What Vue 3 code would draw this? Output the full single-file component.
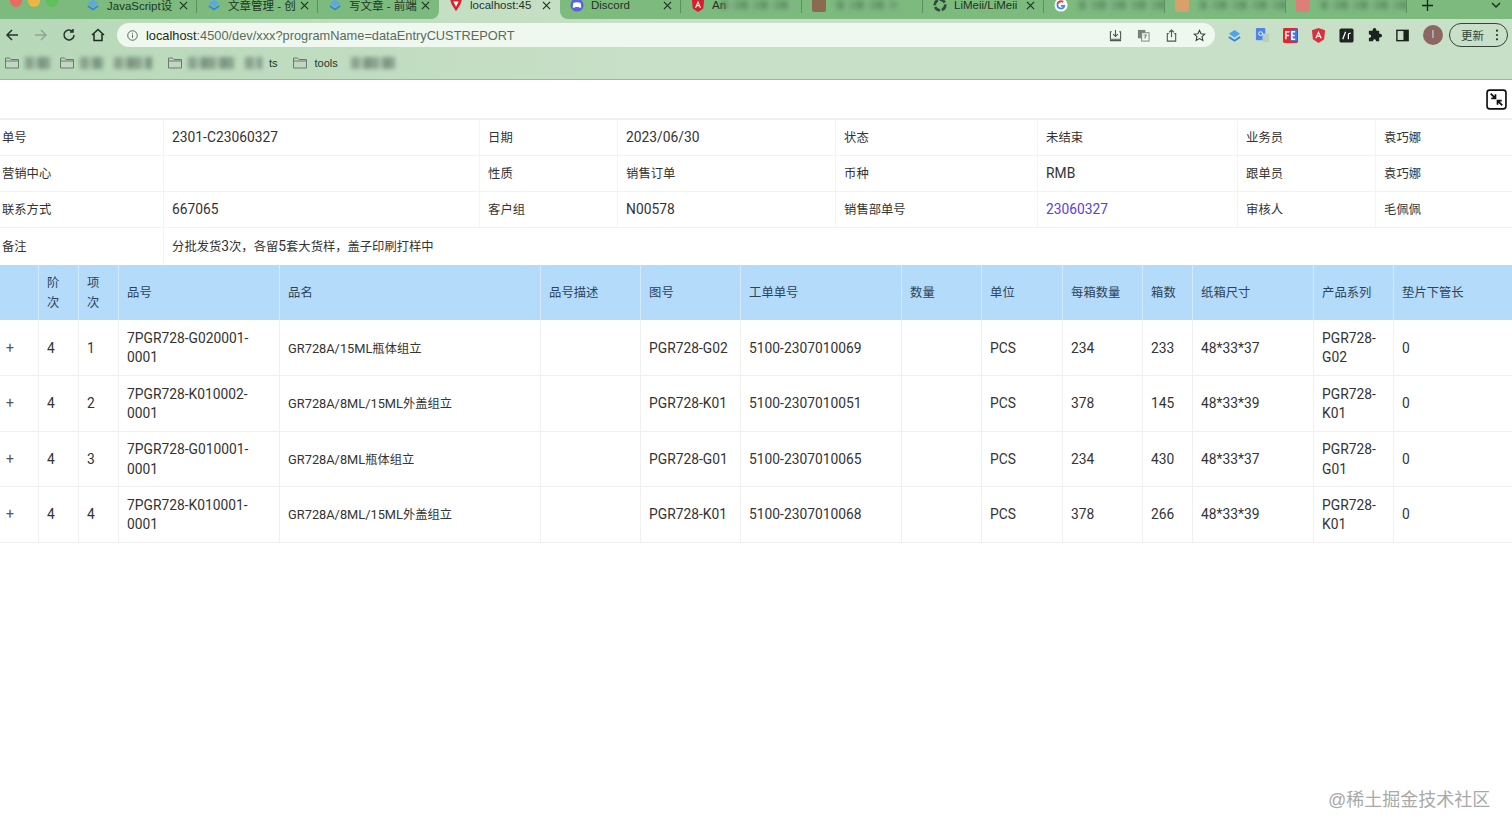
<script setup>
import { h } from 'vue'

// Latin and CJK runs have different optical sizes in the reference, so each run gets its own span.
const Txt = (props) => {
  const text = String(props.t)
  const mixed = /[\u2E80-\uFFEF]/.test(text)
  return (text.match(/[\u2E80-\uFFEF]+|[^\u2E80-\uFFEF]+/g) || []).map((run) => {
    if (/[\u2E80-\uFFEF]/.test(run)) return h('span', { class: 'cjk' }, run)
    return h('span', { class: mixed && /[A-Z]/.test(run) ? 'lat mix' : 'lat' }, run)
  })
}
Txt.props = ['t']

const tabs = [
  { title: 'JavaScript设', icon: 'layer', close: true },
  { title: '文章管理 - 创', icon: 'layer', close: true },
  { title: '写文章 - 前端', icon: 'layer', close: true, beforeActive: true },
  { title: 'localhost:45', icon: 'vite', close: true, active: true },
  { title: 'Discord', icon: 'discord', close: true, afterActive: true },
  { title: 'An', icon: 'angular', blur: 72 },
  { title: '', icon: 'photo', blur: 60 },
  { title: 'LiMeii/LiMeii', icon: 'github', close: true },
  { title: '', icon: 'google', blur: 88 },
  { title: '', icon: 'orange', blur: 90 },
  { title: '', icon: 'pink', blur: 90 }
]

const bookmarks = [
  { folder: true, blur: 25, gap: 10 },
  { folder: true, blur: 23, gap: 11 },
  { blur: 38, gap: 16 },
  { folder: true, blur: 46, gap: 11 },
  { blur: 17, text: 'ts', gap: 15 },
  { folder: true, text: 'tools', gap: 13 },
  { blur: 44, gap: 0 }
]

const info = [
  ['单号', '2301-C23060327', '日期', '2023/06/30', '状态', '未结束', '业务员', '袁巧娜'],
  ['营销中心', '', '性质', '销售订单', '币种', 'RMB', '跟单员', '袁巧娜'],
  ['联系方式', '667065', '客户组', 'N00578', '销售部单号', '23060327', '审核人', '毛佩佩']
]
const infoCols = [163, 316, 138, 218, 202, 200, 138, 137]
const cols = [38, 40, 40, 161, 261, 100, 100, 161, 80, 81, 80, 50, 121, 80, 119]
const heads = ['', '阶次', '项次', '品号', '品名', '品号描述', '图号', '工单单号', '数量', '单位', '每箱数量', '箱数', '纸箱尺寸', '产品系列', '垫片下管长']
const rows = [
  ['4', '1', '7PGR728-G020001-0001', 'GR728A/15ML瓶体组立', '', 'PGR728-G02', '5100-2307010069', '', 'PCS', '234', '233', '48*33*37', 'PGR728-G02', '0'],
  ['4', '2', '7PGR728-K010002-0001', 'GR728A/8ML/15ML外盖组立', '', 'PGR728-K01', '5100-2307010051', '', 'PCS', '378', '145', '48*33*39', 'PGR728-K01', '0'],
  ['4', '3', '7PGR728-G010001-0001', 'GR728A/8ML瓶体组立', '', 'PGR728-G01', '5100-2307010065', '', 'PCS', '234', '430', '48*33*37', 'PGR728-G01', '0'],
  ['4', '4', '7PGR728-K010001-0001', 'GR728A/8ML/15ML外盖组立', '', 'PGR728-K01', '5100-2307010068', '', 'PCS', '378', '266', '48*33*39', 'PGR728-K01', '0']
]
</script>

<template>
  <div class="page">
    <header class="chrome">
      <div class="tabstrip">
        <div class="lights"><i class="red"></i><i class="yellow"></i><i class="green"></i></div>
        <div v-for="(t, i) in tabs" :key="i" class="tab" :class="{ active: t.active, after: t.afterActive, before: t.beforeActive }">
          <svg v-if="t.icon === 'layer'" class="fav" viewBox="0 0 16 16"><path d="M8 2l6 4-6 4-6-4z" fill="#5aa7ea"/><path d="M2 9l6 4 6-4" fill="none" stroke="#2f86dd" stroke-width="2"/></svg>
          <svg v-else-if="t.icon === 'vite'" class="fav" viewBox="0 0 16 16"><path d="M1 1h14l-2 6-5 8-5-8z" fill="#d8232f"/><path d="M5 4h6l-3 6z" fill="#fff"/></svg>
          <svg v-else-if="t.icon === 'discord'" class="fav" viewBox="0 0 16 16"><circle cx="8" cy="8" r="7.5" fill="#5865d8"/><path d="M4 5.500c2.500-1 5.500-1 8 0l1 5-2 1-1-1.200H6l-1 1.200-2-1z" fill="#fff"/></svg>
          <svg v-else-if="t.icon === 'angular'" class="fav" viewBox="0 0 16 16"><path d="M8 0l7 2.500-1 9.500-6 4-6-4-1-9.500z" fill="#d3202c"/><path d="M8 3L4.500 11H6l.6-1.700h2.800L10 11h1.500zM7.200 8L8 6l.8 2z" fill="#fff"/></svg>
          <svg v-else-if="t.icon === 'github'" class="fav" viewBox="0 0 16 16"><circle cx="8" cy="8" r="6" fill="none" stroke="#33493a" stroke-width="3" stroke-dasharray="7 2"/></svg>
          <svg v-else-if="t.icon === 'google'" class="fav" viewBox="0 0 16 16"><circle cx="8" cy="8" r="7.500" fill="#fff"/><path d="M8 4a4 4 0 1 0 3.800 5H8" fill="none" stroke="#4285f4" stroke-width="2"/><path d="M4.500 6a4 4 0 0 1 6-1.500" fill="none" stroke="#e94235" stroke-width="2"/></svg>
          <span v-else class="fav patch" :class="t.icon"></span>
          <span v-if="t.title" class="tab-title">{{ t.title }}</span>
          <span v-if="t.blur" class="smear" :style="{ width: t.blur + 'px' }"></span>
          <svg v-if="t.close" class="tab-x" viewBox="0 0 10 10"><path d="M1 1l8 8M9 1l-8 8" stroke="#1f3324" stroke-width="1.300"/></svg>
        </div>
        <div class="strip-end">
          <svg class="newtab" viewBox="0 0 12 12"><path d="M6 0v12M0 6h12" stroke="#17251a" stroke-width="1.400"/></svg>
          <svg class="chev" viewBox="0 0 10 6"><path d="M1 1l4 4 4-4" fill="none" stroke="#17251a" stroke-width="1.300"/></svg>
        </div>
      </div>

      <div class="toolbar">
        <svg class="nav" viewBox="0 0 14 14"><path d="M13 7H2M7 2L2 7l5 5" fill="none" stroke="#26352a" stroke-width="1.500"/></svg>
        <svg class="nav forward" viewBox="0 0 14 14"><path d="M1 7h11M7 2l5 5-5 5" fill="none" stroke="#8ea794" stroke-width="1.500"/></svg>
        <svg class="nav" viewBox="0 0 14 14"><path d="M12 7a5 5 0 1 1-1.500-3.600M11 1v3H8" fill="none" stroke="#26352a" stroke-width="1.500"/></svg>
        <svg class="nav" viewBox="0 0 14 14"><path d="M1 7l6-5.500L13 7M3 6v6.500h8V6" fill="none" stroke="#1e2a21" stroke-width="1.500"/></svg>
        <div class="omnibox">
          <svg class="info" viewBox="0 0 12 12"><circle cx="6" cy="6" r="5.200" fill="none" stroke="#4a5a4e"/><path d="M6 5v3.500M6 3v1" stroke="#4a5a4e"/></svg>
          <span class="url"><b>localhost</b>:4500/dev/xxx?programName=dataEntryCUSTREPORT</span>
          <div class="omni-actions">
            <svg viewBox="0 0 14 14"><path d="M3 3H1.500v8h11V3H11M7 1v7M4.500 5.500L7 8l2.500-2.500M1 12.500h12" fill="none" stroke="#4c5a50" stroke-width="1.200"/></svg>
            <svg viewBox="0 0 14 14"><rect x="1" y="1" width="8" height="9" fill="#75827a"/><rect x="5" y="4" width="8" height="9" fill="#eef8ee" stroke="#75827a"/><path d="M7 6.500h4M9 6v4M7.500 10l3-3" stroke="#75827a" fill="none" stroke-width=".8"/></svg>
            <svg viewBox="0 0 14 14"><path d="M4 5H2.500v8h9V5H10M7 9V1M4.500 3.500L7 1l2.500 2.500" fill="none" stroke="#4c5a50" stroke-width="1.200"/></svg>
            <svg viewBox="0 0 14 14"><path d="M7 1.500l1.700 3.700 4 .4-3 2.700.9 4L7 10.300 3.400 12.300l.9-4-3-2.700 4-.4z" fill="none" stroke="#364238" stroke-width="1.200"/></svg>
          </div>
        </div>
        <div class="exts">
          <svg viewBox="0 0 16 16"><path d="M8 2l6 4-6 4-6-4z" fill="#4fa3ee"/><path d="M2 9.500l6 4 6-4" fill="none" stroke="#2f86dd" stroke-width="2"/></svg>
          <svg viewBox="0 0 16 16"><rect x="1" y="0" width="10" height="13" rx="1" fill="#4d86e8"/><rect x="8" y="6" width="7" height="9" fill="#b9cfc2"/><circle cx="6" cy="6" r="2" fill="none" stroke="#fff"/></svg>
          <svg viewBox="0 0 16 16"><rect width="16" height="16" rx="1.500" fill="#e3262b"/><rect x="8" y="2" width="7" height="12" fill="#3f78df"/><path d="M3 12V4h4M3 8h3.500M13 4H9.500v8H13M9.500 8H12.500" fill="none" stroke="#fff" stroke-width="1.600"/></svg>
          <svg viewBox="0 0 16 16"><path d="M8 0l7 2.500-1 9.500-6 4-6-4-1-9.500z" fill="#dc2f3c"/><path d="M8 3L4.500 11H6l.6-1.700h2.800L10 11h1.500zM7.200 8L8 6l.8 2z" fill="#fff"/></svg>
          <svg viewBox="0 0 16 16"><rect width="15" height="15" x=".5" y=".5" rx="2" fill="#1e2422"/><path d="M4 12L7 4M10 12V7c0-1.200 1-1.500 2.500-1.500" fill="none" stroke="#fff" stroke-width="1.300"/></svg>
          <svg viewBox="0 0 16 16"><path d="M6 2a2 2 0 0 1 4 0v1h3v3h1a2 2 0 0 1 0 4h-1v4H9.500v-1a1.600 1.600 0 0 0-3 0v1H2v-3.500h1a1.800 1.800 0 0 0 0-3.500H2V3h4z" fill="#1a231d"/></svg>
          <svg viewBox="0 0 16 16"><rect x="2" y="2.500" width="12" height="11" fill="none" stroke="#1a231d" stroke-width="1.500"/><rect x="9" y="2.500" width="5" height="11" fill="#1a231d"/></svg>
          <span class="avatar">I</span>
        </div>
        <div class="update">
          <span>更新</span>
          <svg viewBox="0 0 4 14"><circle cx="2" cy="2" r="1.300"/><circle cx="2" cy="7" r="1.300"/><circle cx="2" cy="12" r="1.300"/></svg>
        </div>
      </div>

      <div class="bookmarks">
        <div v-for="(b, i) in bookmarks" :key="i" class="bm" :style="{ marginRight: b.gap + 'px' }">
          <svg v-if="b.folder" class="folder" viewBox="0 0 14 12"><path d="M.5 11V1h4l1.500 1.500h7.500V11z" fill="#c3d6c3" stroke="#6a7a6d"/><path d="M.5 4h13" stroke="#6a7a6d"/></svg>
          <span v-if="b.blur" class="smear dark" :style="{ width: b.blur + 'px' }"></span>
          <span v-if="b.text" class="bm-text" :class="{ spaced: b.blur }">{{ b.text }}</span>
        </div>
      </div>
    </header>

    <main class="content">
      <div class="actionbar">
        <button class="exit" aria-label="退出全屏">
          <svg viewBox="0 0 20 20"><rect x="1" y="1" width="18" height="18" rx="2.500" fill="#fff" stroke="#111" stroke-width="1.600"/><path d="M4.500 4.500L9 9M9 5v4H5M15.500 15.500L11 11M15 11h-4v4" fill="none" stroke="#111" stroke-width="1.700"/></svg>
        </button>
      </div>

      <table class="info-table">
        <colgroup><col v-for="(w, i) in infoCols" :key="i" :style="{ width: w + 'px' }" /></colgroup>
        <tbody>
          <tr v-for="(r, i) in info" :key="i">
            <td v-for="(c, j) in r" :key="j" :class="{ link: c === '23060327' }"><Txt :t="c" /></td>
          </tr>
          <tr class="last">
            <td><Txt t="备注" /></td>
            <td colspan="7"><Txt t="分批发货3次，各留5套大货样，盖子印刷打样中" /></td>
          </tr>
        </tbody>
      </table>

      <table class="data-table">
        <colgroup><col v-for="(w, i) in cols" :key="i" :style="{ width: w + 'px' }" /></colgroup>
        <thead>
          <tr><th v-for="(h2, i) in heads" :key="i"><Txt :t="h2" /></th></tr>
        </thead>
        <tbody>
          <tr v-for="(r, i) in rows" :key="i">
            <td class="expand">+</td>
            <td v-for="(c, j) in r" :key="j"><Txt :t="c" /></td>
          </tr>
        </tbody>
      </table>
    </main>

    <div class="watermark">@稀土掘金技术社区</div>
  </div>
</template>

<style>
.cjk { font-family: "Noto Sans CJK SC", sans-serif; font-size: 12.300px; }
.lat { font-family: Roboto, "Liberation Sans", sans-serif; font-size: 13.800px; }
.lat.mix { font-size: 12.800px; }
</style>

<style scoped>
.page {
  position: relative;
  width: 1512px;
  height: 834px;
  overflow: hidden;
  background: #fff;
  font-family: "Liberation Sans", "Noto Sans CJK SC", sans-serif;
  font-size: 13px;
  color: #333;
}

/* browser chrome */
.chrome { height: 80px; background: linear-gradient(90deg, #b7d9b8, #c8e0c8 45%); border-bottom: 1px solid #9fb3a2; box-sizing: border-box; }
.tabstrip { display: flex; align-items: flex-end; height: 19px; overflow: hidden; }
.lights { flex: none; display: flex; align-items: flex-start; align-self: flex-start; gap: 6px; width: 76px; height: 24px; padding-left: 10px; box-sizing: border-box; margin-top: -5px; background: #7cba7e; }
.lights i { width: 12px; height: 12px; border-radius: 50%; }
.red { background: #ea6b62; }
.yellow { background: #edb544; }
.green { background: #5dc25a; }
.tab { display: flex; align-items: center; flex: none; box-sizing: border-box; width: 121px; height: 28px; padding: 0 9px 0 10px; position: relative; color: #1f3324; font-size: 11.500px; background: #7cba7e; }
.tab::after { content: ""; position: absolute; right: 0; top: 0; bottom: 6px; width: 1px; background: #5d8f60; }
.tab.active { background: #c4dfc4; }
.tab.active::after, .tab.before::after { display: none; }
.tab.before { border-bottom-right-radius: 8px; }
.tab.after { border-bottom-left-radius: 8px; }
.fav { flex: none; width: 14px; height: 14px; margin-right: 7px; }
.patch { border-radius: 2px; }
.photo { background: #8a6a50; }
.orange { background: #d9a06c; }
.pink { background: #dd7f78; }
.tab-title { flex: 1; min-width: 0; white-space: nowrap; }
.tab-x { flex: none; width: 9px; height: 9px; margin-left: 3px; }
.smear { display: inline-block; flex: none; height: 8px; background: repeating-linear-gradient(90deg, #55805d 0 7px, #8fb596 7px 12px, #6a9672 12px 20px); opacity: .7; filter: blur(2.500px); }
.smear.dark { background: repeating-linear-gradient(90deg, #73897a 0 8px, #a0b5a5 8px 13px, #5f7766 13px 19px); height: 12px; filter: blur(2px); }
.tab .smear { margin-left: 4px; max-width: 88px; }
.strip-end { flex: 1; height: 28px; position: relative; background: #7cba7e; }
.newtab { position: absolute; left: 15px; top: 9px; width: 11px; height: 11px; }
.chev { position: absolute; left: 84px; top: 11px; width: 10px; height: 6px; }

.toolbar { display: flex; align-items: flex-start; height: 29px; padding: 4px 4px 0 5px; box-sizing: border-box; }
.nav { flex: none; width: 14px; height: 14px; margin: 5px 14.500px 0 0; }
.omnibox { display: flex; align-items: center; flex: none; width: 1098px; height: 24px; margin-left: -2px; padding: 0 9px 0 10px; box-sizing: border-box; background: #eef8ee; border-radius: 12px; }
.info { width: 11px; height: 11px; margin-right: 8px; flex: none; }
.url { flex: 1; color: #5b6a5f; font-size: 12.800px; white-space: nowrap; }
.url b { font-weight: 400; color: #1f2a22; }
.omni-actions { display: flex; gap: 15px; }
.omni-actions svg { width: 13px; height: 13px; }
.exts { display: flex; align-items: center; gap: 13px; height: 24px; margin-left: 12px; flex: none; }
.exts svg { width: 15px; height: 15px; flex: none; }
.avatar { width: 20px; height: 20px; border-radius: 50%; background: #8c6660; color: #e8d8d5; font-size: 10px; line-height: 20px; text-align: center; }
.update { display: flex; align-items: center; justify-content: space-between; flex: none; box-sizing: border-box; width: 59px; height: 24px; margin-left: 6px; padding: 0 8px 0 11px; border: 1px solid #33443a; border-radius: 12px; font-size: 11.500px; color: #33443a; }
.update svg { width: 4px; height: 12px; fill: #26352a; }

.bookmarks { display: flex; align-items: center; height: 30px; padding-left: 5px; box-sizing: border-box; }
.bm { display: flex; align-items: center; flex: none; }
.folder { flex: none; width: 14px; height: 12px; margin-right: 6px; }
.bm-text { font-size: 11px; color: #26352a; margin-left: 2px; }
.bm-text.spaced { margin-left: 7px; }

/* page body */
.actionbar { display: flex; justify-content: flex-end; align-items: center; height: 38px; padding-right: 5px; box-sizing: border-box; }
.exit { display: block; width: 21px; height: 21px; padding: 0; border: 0; background: none; }
.exit svg { display: block; width: 21px; height: 21px; }

table { width: 1512px; border-collapse: collapse; table-layout: fixed; }
.info-table { border-top: 2px solid #f0f0f0; }
.info-table td { height: 36px; padding: 0 8px 0 8.600px; border-bottom: 1px solid #f2f2f2; border-left: 1px solid #f4f4f4; box-sizing: border-box; line-height: 19px; }
.info-table .last td { height: 38px; border-bottom: 0; }
.info-table td:first-child { padding-left: 2px; border-left: 0; }
.link { color: #5a3fd8; }

.data-table th, .data-table td { padding: 0 8px 0 8.600px; box-sizing: border-box; line-height: 19.500px; text-align: left; font-weight: 400; border-left: 1px solid #f0f0f0; word-break: break-word; }
.data-table th:first-child, .data-table td:first-child { border-left: 0; }
.data-table th { height: 55px; background: #b5dbfb; border-left-color: #d4e9fb; color: #2c4358; }
.data-table td { padding-top: 2px; border-bottom: 1px solid #f0f0f0; }
.data-table tbody tr:nth-child(odd) td { height: 55px; }
.data-table tbody tr:nth-child(even) td { height: 56px; }
.data-table td.expand { padding: 2px 0 0 6px; color: #555; font-family: Roboto, sans-serif; font-size: 14px; }

.watermark { position: absolute; left: 1328px; top: 789px; font-size: 18px; line-height: 22px; color: #a9a9a9; white-space: nowrap; }
</style>
